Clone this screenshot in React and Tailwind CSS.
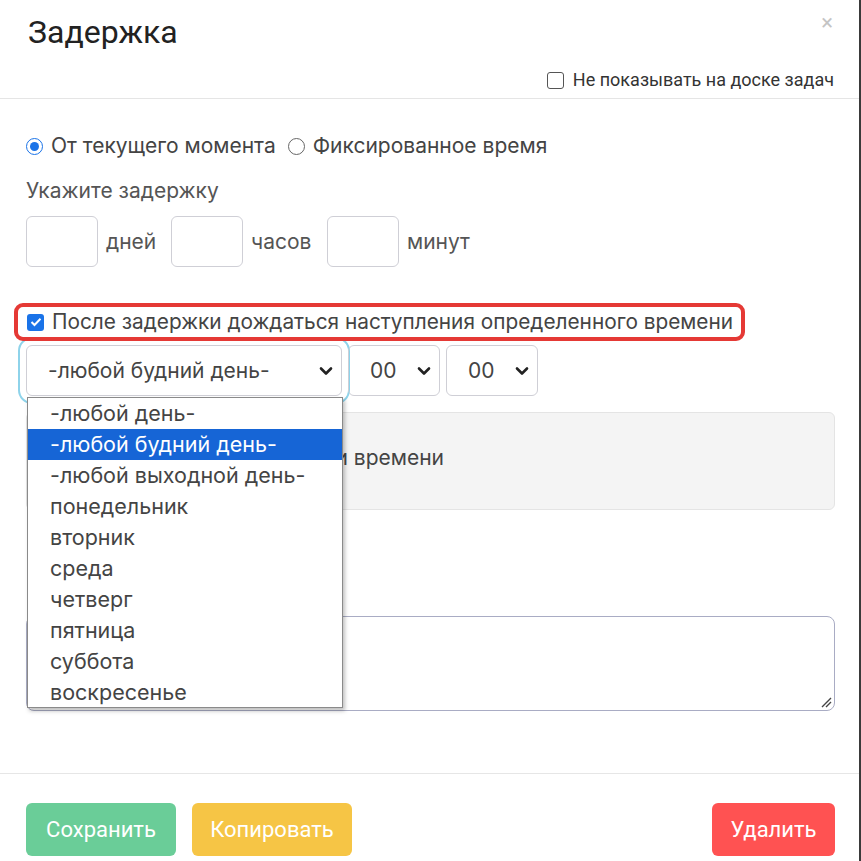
import React from "react";

const Chevron = () => (
  <svg width="14" height="10" viewBox="0 0 14 10" className="shrink-0">
    <path d="M2 2.5 L7 7.5 L12 2.5" fill="none" stroke="#222" strokeWidth="2.6" strokeLinecap="round" strokeLinejoin="round" />
  </svg>
);

const days = [
  "-любой день-",
  "-любой будний день-",
  "-любой выходной день-",
  "понедельник",
  "вторник",
  "среда",
  "четверг",
  "пятница",
  "суббота",
  "воскресенье",
];

export default function App() {
  return (
    <div className="relative w-[861px] h-[861px] bg-white overflow-hidden border-r-2 border-[#3a3a3a] text-[#444]" style={{ fontFamily: "Inter, 'Noto Sans', sans-serif" }}>
      {/* header */}
      <div className="h-[99px] border-b border-[#e5e5e5] pl-[28px] pr-[25px] flex flex-col" style={{ fontFamily: "Roboto, 'Liberation Sans', sans-serif" }}>
        <div className="flex justify-between items-start pt-[12px]">
          <div className="text-[32px] leading-[40px] text-[#222]">Задержка</div>
          <div className="text-[22px] leading-[22px] text-[#c4c4c4] mt-[0px] mr-[1px]">×</div>
        </div>
        <div className="flex justify-end items-center gap-[9px] mt-[17px]">
          <span className="w-[17px] h-[17px] rounded-[3px] border-[1.5px] border-[#555] bg-white"></span>
          <span className="text-[18px] leading-[22px] text-[#333]">Не показывать на доске задач</span>
        </div>
      </div>

      {/* body */}
      <div className="pl-[26px] pr-[24px] pt-[33px] flex flex-col">
        <div className="flex items-center h-[28px] text-[21px] text-[#444]">
          <span className="w-[17px] h-[17px] rounded-full border-[1.5px] border-[#1a73e8] flex items-center justify-center">
            <span className="w-[9px] h-[9px] rounded-full bg-[#1a73e8]"></span>
          </span>
          <span className="ml-[8px]">От текущего момента</span>
          <span className="ml-[12px] w-[17px] h-[17px] rounded-full border-[1.5px] border-[#666]"></span>
          <span className="ml-[8px]">Фиксированное время</span>
        </div>
        <div className="mt-[17px] h-[28px] leading-[28px] text-[21px] text-[#555]">Укажите задержку</div>
        <div className="mt-[11px] flex items-center text-[21px] text-[#555]">
          <div className="w-[72px] h-[51px] rounded-[6px] border border-[#cfcfd6]"></div>
          <span className="ml-[8px] w-[65px]">дней</span>
          <div className="w-[72px] h-[51px] rounded-[6px] border border-[#cfcfd6]"></div>
          <span className="ml-[8px] w-[76px]">часов</span>
          <div className="w-[72px] h-[51px] rounded-[6px] border border-[#cfcfd6]"></div>
          <span className="ml-[8px]">минут</span>
        </div>

        <div className="relative z-10 mt-[36px] -ml-[12px] self-start h-[38px] border-4 border-[#e53935] rounded-[9px] pl-[9px] pr-[8px] flex items-center bg-transparent">
          <span className="w-[17px] h-[17px] rounded-[3px] bg-[#1a73e8] flex items-center justify-center">
            <svg width="12" height="10" viewBox="0 0 12 10"><path d="M1.5 5 L4.5 8 L10.5 1.8" fill="none" stroke="white" strokeWidth="2" /></svg>
          </span>
          <span className="ml-[8px] text-[20.8px] text-[#444] leading-[24px]">После задержки дождаться наступления определенного времени</span>
        </div>

        <div className="mt-[4px] flex items-center gap-[6px] text-[21px] text-[#444]">
          <div className="w-[316px] h-[51px] rounded-[6px] border border-[#cfcfd6] flex items-center pl-[21px] pr-[8px] justify-between outline-2 outline-offset-[6px] outline-[#8ed3ea]">
            <span>-любой будний день-</span>
            <Chevron />
          </div>
          <div className="w-[92px] h-[51px] rounded-[6px] border border-[#cfcfd6] flex items-center pl-[21px] pr-[8px] justify-between">
            <span>00</span>
            <Chevron />
          </div>
          <div className="w-[92px] h-[51px] rounded-[6px] border border-[#cfcfd6] flex items-center pl-[21px] pr-[8px] justify-between">
            <span>00</span>
            <Chevron />
          </div>
        </div>

        <div className="mt-[16px] h-[98px] rounded-[6px] border border-[#e4e4e4] bg-[#f4f4f4] flex items-center pl-[30px] pb-[6px] text-[21px] text-[#444]">
          Ожидание указанного дня и времени
        </div>

        <div className="mt-[62px] text-[21px] text-[#555]">Комментарий</div>
        <div className="mt-[12px] h-[95px] rounded-[8px] border border-[#a9acc4] relative">
          <svg className="absolute right-[2px] bottom-[2px]" width="12" height="12" viewBox="0 0 12 12">
            <path d="M2 11 L11 2 M6 11 L11 6" stroke="#444" strokeWidth="1.4" />
          </svg>
        </div>
      </div>

      {/* footer */}
      <div className="absolute left-0 right-0 top-[773px] border-t border-[#e6e6e6] h-[88px] pl-[26px] pr-[24px] pt-[29px] flex items-start" style={{ fontFamily: "Roboto, 'Liberation Sans', sans-serif" }}>
        <div className="w-[150px] h-[53px] rounded-[6px] bg-[#6acd98] text-white text-[22px] flex items-center justify-center">Сохранить</div>
        <div className="ml-[16px] w-[160px] h-[53px] rounded-[6px] bg-[#f6c545] text-white text-[22px] flex items-center justify-center">Копировать</div>
        <div className="ml-auto w-[123px] h-[53px] rounded-[6px] bg-[#ff5252] text-white text-[22px] flex items-center justify-center">Удалить</div>
      </div>

      {/* open dropdown */}
      <div className="absolute left-[27px] top-[397px] w-[316px] h-[311px] bg-white border border-[#8a8a8a] shadow-[2px_3px_4px_rgba(0,0,0,0.25)] z-20">
        {days.map((d, i) => (
          <div key={d} className={"h-[31px] leading-[30px] pl-[22px] text-[21.5px] " + (i === 1 ? "bg-[#1665d6] text-white" : "text-[#444]")}>{d}</div>
        ))}
      </div>
    </div>
  );
}
